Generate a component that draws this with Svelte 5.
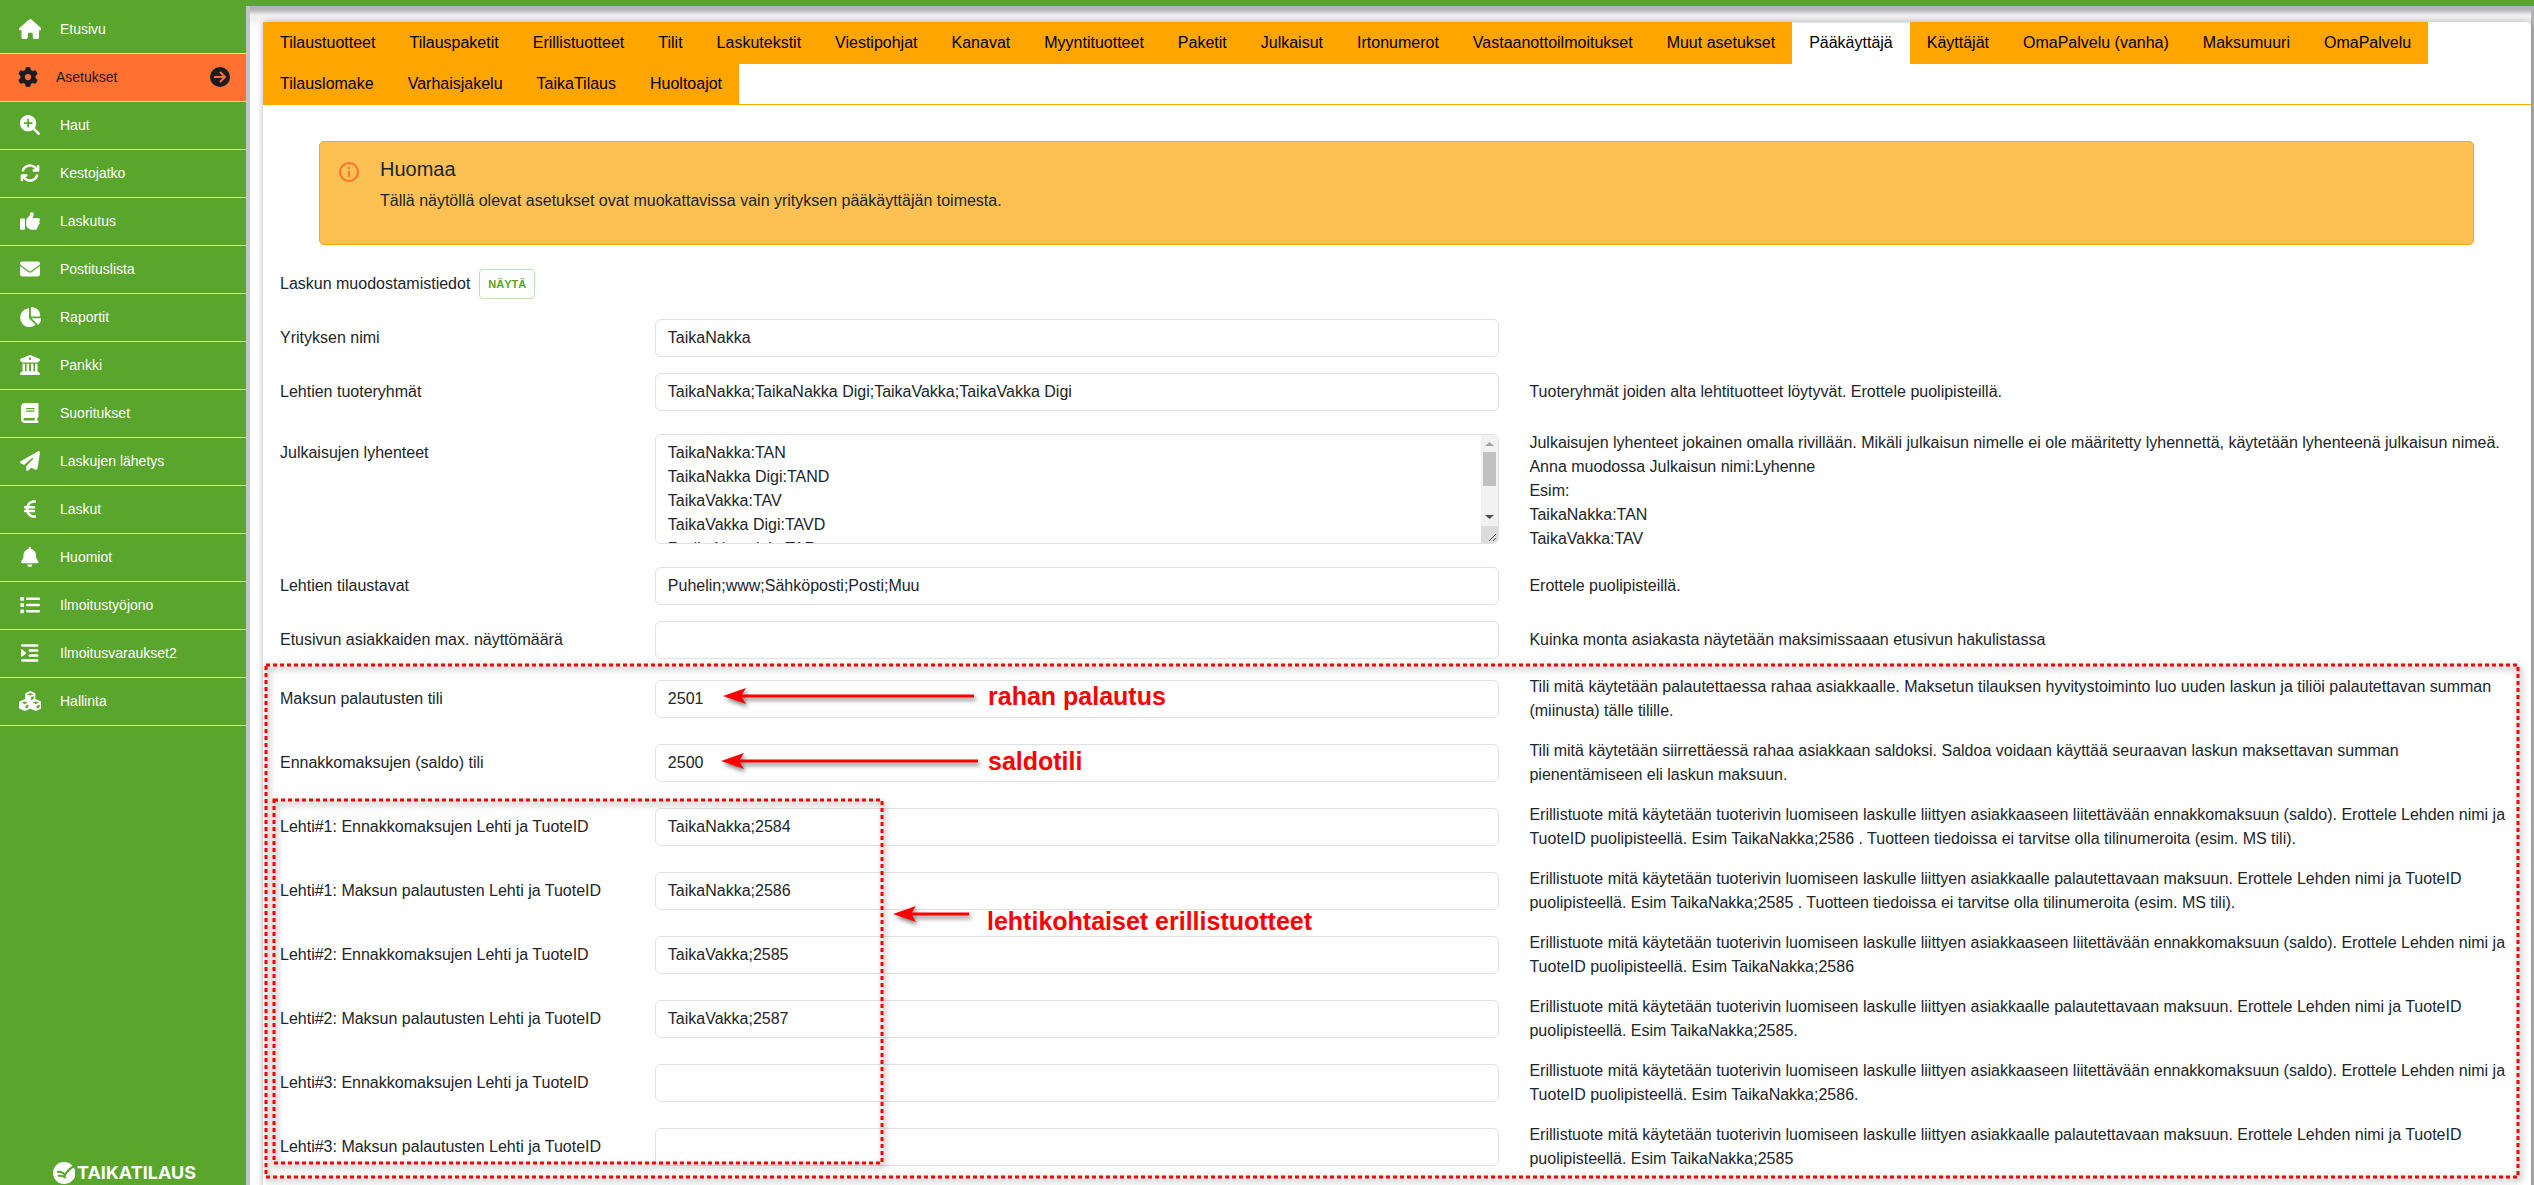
<script lang="ts">
    type Icon = { w: number; d: string };
    type Row = {
        id: string;
        label: string;
        value: string;
        help: string[];
        multiline?: boolean;
    };

    const icons: Record<string, Icon> = {
        home: {
            w: 576,
            d: "M575.8 255.5c0 18-15 32.1-32 32.1h-32l.7 160.2c0 2.7-.2 5.4-.5 8.1V472c0 22.1-17.9 40-40 40H456c-1.1 0-2.2 0-3.3-.1c-1.4 .1-2.8 .1-4.2 .1H416 392c-22.1 0-40-17.9-40-40V448 384c0-17.7-14.3-32-32-32H256c-17.7 0-32 14.3-32 32v64 24c0 22.1-17.9 40-40 40H160 128.1c-1.5 0-3-.1-4.5-.2c-1.2 .1-2.4 .2-3.6 .2H104c-22.1 0-40-17.9-40-40V360c0-.9 0-1.9 .1-2.8V287.6H32c-18 0-32-14-32-32.1c0-9 3-17 10-24L266.4 8c7-7 15-8 22-8s15 2 21 7L564.8 231.5c8 7 12 15 11 24z",
        },
        gear: {
            w: 512,
            d: "M495.9 166.6c3.2 8.7 .5 18.4-6.4 24.6l-43.3 39.4c1.1 8.3 1.7 16.8 1.7 25.4s-.6 17.1-1.7 25.4l43.3 39.4c6.9 6.2 9.6 15.9 6.4 24.6c-4.4 11.9-9.7 23.3-15.8 34.3l-4.7 8.1c-6.6 11-14 21.4-22.1 31.2c-5.9 7.2-15.7 9.6-24.5 6.8l-55.7-17.7c-13.4 10.3-28.2 18.9-44 25.4l-12.5 57.1c-2 9.1-9 16.3-18.2 17.8c-13.8 2.3-28 3.5-42.5 3.5s-28.7-1.2-42.5-3.5c-9.2-1.5-16.2-8.7-18.2-17.8l-12.5-57.1c-15.8-6.5-30.6-15.1-44-25.4L83.1 425.9c-8.8 2.8-18.6 .3-24.5-6.8c-8.1-9.8-15.5-20.2-22.1-31.2l-4.7-8.1c-6.1-11-11.4-22.4-15.8-34.3c-3.2-8.7-.5-18.4 6.4-24.6l43.3-39.4C64.6 273.1 64 264.6 64 256s.6-17.1 1.7-25.4L22.4 191.2c-6.9-6.2-9.6-15.9-6.4-24.6c4.4-11.9 9.7-23.3 15.8-34.3l4.7-8.1c6.6-11 14-21.4 22.1-31.2c5.9-7.2 15.7-9.6 24.5-6.8l55.7 17.7c13.4-10.3 28.2-18.9 44-25.4l12.5-57.1c2-9.1 9-16.3 18.2-17.8C227.3 1.2 241.5 0 256 0s28.7 1.2 42.5 3.5c9.2 1.5 16.2 8.7 18.2 17.8l12.5 57.1c15.8 6.5 30.6 15.1 44 25.4l55.7-17.7c8.8-2.8 18.6-.3 24.5 6.8c8.1 9.8 15.5 20.2 22.1 31.2l4.7 8.1c6.1 11 11.4 22.4 15.8 34.3zM256 336a80 80 0 1 0 0-160 80 80 0 1 0 0 160z",
        },
        search: {
            w: 512,
            d: "M416 208c0 45.9-14.9 88.3-40 122.7L502.6 457.4c12.5 12.5 12.5 32.8 0 45.3s-32.8 12.5-45.3 0L330.7 376c-34.4 25.2-76.8 40-122.7 40C93.1 416 0 322.9 0 208S93.1 0 208 0S416 93.1 416 208zM184 296c0 13.3 10.7 24 24 24s24-10.7 24-24V232h64c13.3 0 24-10.7 24-24s-10.7-24-24-24H232V120c0-13.3-10.7-24-24-24s-24 10.7-24 24v64H120c-13.3 0-24 10.7-24 24s10.7 24 24 24h64v64z",
        },
        refresh: {
            w: 512,
            d: "M105.1 202.6c7.7-21.8 20.2-42.3 37.8-59.8c62.5-62.5 163.8-62.5 226.3 0L386.3 160H352c-17.7 0-32 14.3-32 32s14.3 32 32 32H463.5h.4c17.7 0 32-14.3 32-32V80c0-17.7-14.3-32-32-32s-32 14.3-32 32v35.2L414.4 97.6c-87.5-87.5-229.3-87.5-316.8 0C73.2 122 55.6 150.7 44.8 181.4c-5.9 16.7 2.9 34.9 19.5 40.8s34.9-2.9 40.8-19.5zM39 289.3c-5 1.5-9.8 4.2-13.7 8.2c-4 4-6.7 8.8-8.1 14c-.3 1.2-.6 2.5-.8 3.8c-.3 1.7-.4 3.4-.4 5.1V432c0 17.7 14.3 32 32 32s32-14.3 32-32V396.9l17.6 17.5c87.5 87.4 229.3 87.4 316.7 0c24.4-24.4 42.1-53.1 52.9-83.7c5.9-16.7-2.9-34.9-19.5-40.8s-34.9 2.9-40.8 19.5c-7.7 21.8-20.2 42.3-37.8 59.8c-62.5 62.5-163.8 62.5-226.3 0l-.1-.1L125.6 352H160c17.7 0 32-14.3 32-32s-14.3-32-32-32H48.4c-1.6 0-3.2 .1-4.8 .3s-3.1 .5-4.6 1z",
        },
        thumb: {
            w: 512,
            d: "M313.4 32.9c26 5.2 42.9 30.5 37.7 56.5l-2.3 11.4c-5.3 26.7-15.1 52.1-28.8 75.2H464c26.5 0 48 21.5 48 48c0 18.5-10.5 34.6-25.9 42.6C497 275.4 504 288.9 504 304c0 23.4-16.8 42.9-38.9 47.1c4.4 7.3 6.9 15.8 6.9 24.9c0 21.3-13.9 39.4-33.1 45.6c.7 3.3 1.1 6.8 1.1 10.4c0 26.5-21.5 48-48 48H294.5c-19 0-37.5-5.6-53.3-16.1l-38.5-25.7C176 420.4 160 390.4 160 358.3V320 272 247.1c0-29.2 13.3-56.7 36-75l7.4-5.9c26.5-21.2 44.6-51 51.2-84.2l2.3-11.4c5.2-26 30.5-42.9 56.5-37.7zM32 192H96c17.7 0 32 14.3 32 32V448c0 17.7-14.3 32-32 32H32c-17.7 0-32-14.3-32-32V224c0-17.7 14.3-32 32-32z",
        },
        mail: {
            w: 512,
            d: "M48 64C21.5 64 0 85.5 0 112c0 15.1 7.1 29.3 19.2 38.4L236.8 313.6c11.4 8.5 27 8.5 38.4 0L492.8 150.4c12.1-9.1 19.2-23.3 19.2-38.4c0-26.5-21.5-48-48-48H48zM0 176V384c0 35.3 28.7 64 64 64H448c35.3 0 64-28.7 64-64V176L294.4 339.2c-22.8 17.1-54 17.1-76.8 0L0 176z",
        },
        pie: {
            w: 576,
            d: "M304 240V16.6c0-9 7-16.6 16-16.6C443.7 0 544 100.3 544 224c0 9-7.6 16-16.6 16H304zM32 272C32 150.7 122.1 50.3 239 34.3c9.2-1.3 17 6.1 17 15.4V288L412.5 444.5c6.7 6.7 6.2 17.7-1.5 23.1C371.8 495.6 323.8 512 272 512C139.5 512 32 404.6 32 272zm526.4 16c9.3 0 16.6 7.8 15.4 17c-7.7 55.9-34.6 105.6-73.9 142.3c-6 5.6-15.4 5.2-21.2-.7L320 288H558.4z",
        },
        bank: {
            w: 512,
            d: "M243.4 2.6l-224 96c-14 6-21.8 21-18.7 35.8S16.8 160 32 160v8c0 13.3 10.7 24 24 24H456c13.3 0 24-10.7 24-24v-8c15.2 0 28.3-10.7 31.3-25.6s-4.8-29.9-18.7-35.8l-224-96c-8-3.4-17.2-3.4-25.2 0zM128 224H64V420.3c-.6 .3-1.2 .7-1.8 1.1l-48 32c-11.7 7.8-17 22.4-12.9 35.9S17.9 512 32 512H480c14.1 0 26.5-9.2 30.6-22.7s-1.1-28.1-12.9-35.9l-48-32c-.6-.4-1.2-.7-1.8-1.1V224H384V416H344V224H280V416H232V224H168V416H128V224zM256 64a32 32 0 1 1 0 64 32 32 0 1 1 0-64z",
        },
        book: {
            w: 448,
            d: "M96 0C43 0 0 43 0 96V416c0 53 43 96 96 96H384h32c17.7 0 32-14.3 32-32s-14.3-32-32-32V384c17.7 0 32-14.3 32-32V32c0-17.7-14.3-32-32-32H384 96zm0 384H352v64H96c-17.7 0-32-14.3-32-32s14.3-32 32-32zm32-240c0-8.8 7.2-16 16-16H336c8.8 0 16 7.2 16 16s-7.2 16-16 16H144c-8.8 0-16-7.2-16-16zm16 48H336c8.8 0 16 7.2 16 16s-7.2 16-16 16H144c-8.8 0-16-7.2-16-16s7.2-16 16-16z",
        },
        plane: {
            w: 512,
            d: "M498.1 5.6c10.1 7 15.4 19.1 13.5 31.2l-64 416c-1.5 9.7-7.4 18.2-16 23s-18.9 5.4-28 1.6L284 427.7l-68.5 74.1c-8.9 9.7-22.9 12.9-35.2 8.1S160 493.2 160 480V396.4c0-4 1.5-7.8 4.2-10.7L331.8 202.8c5.8-6.3 5.6-16-.4-22s-15.7-6.4-22-.7L106 360.8 17.7 316.6C7.1 311.3 .3 300.7 0 288.9s5.9-22.8 16.1-28.7l448-256c10.7-6.1 23.9-5.5 34 1.4z",
        },
        euro: {
            w: 320,
            d: "M48.1 240c-.1 2.7-.1 5.3-.1 8v16c0 2.7 0 5.3 .1 8H32c-17.7 0-32 14.3-32 32s14.3 32 32 32H60.3C89.9 419.9 170 480 264 480h24c17.7 0 32-14.3 32-32s-14.3-32-32-32H264c-57.9 0-108.2-32.4-133.9-80H256c17.7 0 32-14.3 32-32s-14.3-32-32-32H112.2c-.1-2.6-.2-5.3-.2-8V248c0-2.7 .1-5.4 .2-8H256c17.7 0 32-14.3 32-32s-14.3-32-32-32H130.1c25.7-47.6 76-80 133.9-80h24c17.7 0 32-14.3 32-32s-14.3-32-32-32H264C170 32 89.9 92.1 60.3 176H32c-17.7 0-32 14.3-32 32s14.3 32 32 32H48.1z",
        },
        bell: {
            w: 448,
            d: "M224 0c-17.7 0-32 14.3-32 32V51.2C119 66 64 130.6 64 208v18.8c0 47-17.3 92.4-48.5 127.6l-7.4 8.3c-8.4 9.4-10.4 22.9-5.3 34.4S19.4 416 32 416H416c12.6 0 24-7.4 29.2-18.9s3.1-25-5.3-34.4l-7.4-8.3C401.3 319.2 384 273.9 384 226.8V208c0-77.4-55-142-128-156.8V32c0-17.7-14.3-32-32-32zm45.3 493.3c12-12 18.7-28.3 18.7-45.3H224 160c0 17 6.7 33.3 18.7 45.3s28.3 18.7 45.3 18.7s33.3-6.7 45.3-18.7z",
        },
        list: {
            w: 512,
            d: "M24 48h64q16 0 16 16v64q0 16-16 16H24q-16 0-16-16V64q0-16 16-16zM24 208h64q16 0 16 16v64q0 16-16 16H24q-16 0-16-16V224q0-16 16-16zM24 368h64q16 0 16 16v64q0 16-16 16H24q-16 0-16-16V384q0-16 16-16zM184 64H480a32 32 0 0 1 0 64H184a32 32 0 0 1 0-64zM184 224H480a32 32 0 0 1 0 64H184a32 32 0 0 1 0-64zM184 384H480a32 32 0 0 1 0 64H184a32 32 0 0 1 0-64z",
        },
        indent: {
            w: 448,
            d: "M32 32H416a32 32 0 0 1 0 64H32a32 32 0 0 1 0-64zM224 160H416a32 32 0 0 1 0 64H224a32 32 0 0 1 0-64zM224 288H416a32 32 0 0 1 0 64H224a32 32 0 0 1 0-64zM32 416H416a32 32 0 0 1 0 64H32a32 32 0 0 1 0-64zM0 176Q2 154 24 162L128 244Q138 256 128 268L24 350Q2 358 0 336z",
        },
        cubes: {
            w: 576,
            d: "M288 0L418 52V206L554 262Q576 272 576 296V426Q576 446 556 456L446 508Q430 514 414 508L288 452L162 508Q146 514 130 508L20 456Q0 446 0 426V296Q0 272 22 262L158 206V72Q158 56 174 48zM288 52L208 84L288 118L368 84zM310 160V234L374 206V130zM146 266L66 300L146 334L226 300zM168 378V452L240 418V346zM430 266L350 300L430 334L510 300zM452 378V452L528 418V346z",
        },
    };

    const menu = [
        ["home", "Etusivu"],
        ["gear", "Asetukset"],
        ["search", "Haut"],
        ["refresh", "Kestojatko"],
        ["thumb", "Laskutus"],
        ["mail", "Postituslista"],
        ["pie", "Raportit"],
        ["bank", "Pankki"],
        ["book", "Suoritukset"],
        ["plane", "Laskujen lähetys"],
        ["euro", "Laskut"],
        ["bell", "Huomiot"],
        ["list", "Ilmoitustyöjono"],
        ["indent", "Ilmoitusvaraukset2"],
        ["cubes", "Hallinta"],
    ];

    const tabs = [
        "Tilaustuotteet",
        "Tilauspaketit",
        "Erillistuotteet",
        "Tilit",
        "Laskutekstit",
        "Viestipohjat",
        "Kanavat",
        "Myyntituotteet",
        "Paketit",
        "Julkaisut",
        "Irtonumerot",
        "Vastaanottoilmoitukset",
        "Muut asetukset",
        "Pääkäyttäjä",
        "Käyttäjät",
        "OmaPalvelu (vanha)",
        "Maksumuuri",
        "OmaPalvelu",
        "Tilauslomake",
        "Varhaisjakelu",
        "TaikaTilaus",
        "Huoltoajot",
    ];

    const prepaidHelp =
        "Erillistuote mitä käytetään tuoterivin luomiseen laskulle liittyen asiakkaaseen liitettävään ennakkomaksuun (saldo). Erottele Lehden nimi ja TuoteID puolipisteellä. Esim ";
    const refundHelp =
        "Erillistuote mitä käytetään tuoterivin luomiseen laskulle liittyen asiakkaalle palautettavaan maksuun. Erottele Lehden nimi ja TuoteID puolipisteellä. Esim ";

    const rows: Row[] = $state([
        { id: "company", label: "Yrityksen nimi", value: "TaikaNakka", help: [] },
        {
            id: "groups",
            label: "Lehtien tuoteryhmät",
            value: "TaikaNakka;TaikaNakka Digi;TaikaVakka;TaikaVakka Digi",
            help: ["Tuoteryhmät joiden alta lehtituotteet löytyvät. Erottele puolipisteillä."],
        },
        {
            id: "abbreviations",
            label: "Julkaisujen lyhenteet",
            value: "TaikaNakka:TAN\nTaikaNakka Digi:TAND\nTaikaVakka:TAV\nTaikaVakka Digi:TAVD\nRadio Nostalgia:TAR\n\n",
            help: [
                "Julkaisujen lyhenteet jokainen omalla rivillään. Mikäli julkaisun nimelle ei ole määritetty lyhennettä, käytetään lyhenteenä julkaisun nimeä.",
                "Anna muodossa Julkaisun nimi:Lyhenne",
                "Esim:",
                "TaikaNakka:TAN",
                "TaikaVakka:TAV",
            ],
            multiline: true,
        },
        {
            id: "channels",
            label: "Lehtien tilaustavat",
            value: "Puhelin;www;Sähköposti;Posti;Muu",
            help: ["Erottele puolipisteillä."],
        },
        {
            id: "max-customers",
            label: "Etusivun asiakkaiden max. näyttömäärä",
            value: "",
            help: ["Kuinka monta asiakasta näytetään maksimissaaan etusivun hakulistassa"],
        },
        {
            id: "refund-account",
            label: "Maksun palautusten tili",
            value: "2501",
            help: [
                "Tili mitä käytetään palautettaessa rahaa asiakkaalle. Maksetun tilauksen hyvitystoiminto luo uuden laskun ja tiliöi palautettavan summan (miinusta) tälle tilille.",
            ],
        },
        {
            id: "prepaid-account",
            label: "Ennakkomaksujen (saldo) tili",
            value: "2500",
            help: [
                "Tili mitä käytetään siirrettäessä rahaa asiakkaan saldoksi. Saldoa voidaan käyttää seuraavan laskun maksettavan summan pienentämiseen eli laskun maksuun.",
            ],
        },
        {
            id: "prepaid-1",
            label: "Lehti#1: Ennakkomaksujen Lehti ja TuoteID",
            value: "TaikaNakka;2584",
            help: [prepaidHelp + "TaikaNakka;2586 . Tuotteen tiedoissa ei tarvitse olla tilinumeroita (esim. MS tili)."],
        },
        {
            id: "refund-1",
            label: "Lehti#1: Maksun palautusten Lehti ja TuoteID",
            value: "TaikaNakka;2586",
            help: [refundHelp + "TaikaNakka;2585 . Tuotteen tiedoissa ei tarvitse olla tilinumeroita (esim. MS tili)."],
        },
        {
            id: "prepaid-2",
            label: "Lehti#2: Ennakkomaksujen Lehti ja TuoteID",
            value: "TaikaVakka;2585",
            help: [prepaidHelp + "TaikaNakka;2586"],
        },
        {
            id: "refund-2",
            label: "Lehti#2: Maksun palautusten Lehti ja TuoteID",
            value: "TaikaVakka;2587",
            help: [refundHelp + "TaikaNakka;2585."],
        },
        {
            id: "prepaid-3",
            label: "Lehti#3: Ennakkomaksujen Lehti ja TuoteID",
            value: "",
            help: [prepaidHelp + "TaikaNakka;2586."],
        },
        {
            id: "refund-3",
            label: "Lehti#3: Maksun palautusten Lehti ja TuoteID",
            value: "",
            help: [refundHelp + "TaikaNakka;2585"],
        },
    ]);

    let activeItem = $state("Asetukset");
    let activeTab = $state("Pääkäyttäjä");
</script>

{#snippet arrow(length: number)}
    <svg width={length} height="18" viewBox="0 0 {length} 18">
        <path d="M18 9H{length}" stroke="#f00" stroke-width="3" />
        <path d="M0 9L23 1L18 9L23 17z" fill="#f00" />
    </svg>
{/snippet}

<div class="topbar"></div>
<div class="layout">
    <nav class="sidebar">
        {#each menu as [icon, text]}
            <a
                href="#{icon}"
                class="menu-item"
                class:active={text === activeItem}
                onclick={() => (activeItem = text)}
            >
                <span class="menu-icon">
                    <svg viewBox="0 0 {icons[icon].w} 512" height="20">
                        <path d={icons[icon].d} fill="currentColor" fill-rule="evenodd" />
                    </svg>
                </span>
                <span>{text}</span>
                {#if text === activeItem}
                    <svg class="menu-arrow" viewBox="0 0 20 20" width="20" height="20">
                        <circle cx="10" cy="10" r="10" fill="currentColor" />
                        <path
                            d="M4 10H15M10 5L15 10L10 15"
                            fill="none"
                            stroke="#ff7031"
                            stroke-width="2"
                        />
                    </svg>
                {/if}
            </a>
        {/each}
        <div class="logo">
            <svg viewBox="0 0 24 24" width="24" height="24">
                <circle cx="11" cy="12" r="11" fill="#fff" />
                <path
                    d="M4 11Q9 10 12 14Q15 8 23 4M5 15Q9 14 13 17"
                    fill="none"
                    stroke="#5aa52c"
                    stroke-width="2"
                />
                <path d="M12 17Q18 16 22 7V16Q19 21 15 22Q20 18 20 13Q17 17 12 17z" fill="#fff" />
            </svg>
            <span>TAIKATILAUS</span>
        </div>
    </nav>

    <main class="content">
        <div class="card">
            <ul class="tabs">
                {#each tabs as tab}
                    <li>
                        <button
                            type="button"
                            class:active={tab === activeTab}
                            onclick={() => (activeTab = tab)}>{tab}</button
                        >
                    </li>
                {/each}
            </ul>

            <div class="alert">
                <svg viewBox="0 0 20 20" width="20" height="20">
                    <circle cx="10" cy="10" r="9" fill="none" stroke="#ff7031" stroke-width="2" />
                    <path d="M10 5V7M10 9V15" stroke="#ff7031" stroke-width="2" />
                </svg>
                <div>
                    <h2>Huomaa</h2>
                    <p>Tällä näytöllä olevat asetukset ovat muokattavissa vain yrityksen pääkäyttäjän toimesta.</p>
                </div>
            </div>

            <form class="settings">
                <div class="invoice-info">
                    <span>Laskun muodostamistiedot</span>
                    <button type="button">NÄYTÄ</button>
                </div>
                {#each rows as row}
                    <div class="row" class:tall={row.multiline}>
                        <label for={row.id}>{row.label}</label>
                        <div class="field">
                            {#if row.multiline}
                                <textarea id={row.id} bind:value={row.value}></textarea>
                                <svg class="scrollbar" viewBox="0 0 17 108" width="17" height="108">
                                    <path d="M0 0H12Q17 0 17 5V91H0z" fill="#f1f1f1" />
                                    <path d="M4 11H13L8.5 7z" fill="#a3a3a3" />
                                    <path d="M2 17H15V51H2z" fill="#c1c1c1" />
                                    <path d="M4 80H13L8.5 84z" fill="#505050" />
                                    <path d="M0 91H17V103Q17 108 12 108H0z" fill="#dcdcdc" />
                                    <path d="M8 106L15 99M12 106L15 103" stroke="#505050" />
                                </svg>
                            {:else}
                                <input id={row.id} type="text" bind:value={row.value} />
                            {/if}
                        </div>
                        <div class="help">
                            {#each row.help as line}
                                <p>{line}</p>
                            {/each}
                        </div>
                    </div>
                {/each}
            </form>

            <!-- red notes on top of the form -->
            <svg class="frame frame-all"><rect width="100%" height="100%" /></svg>
            <svg class="frame frame-products"><rect width="100%" height="100%" /></svg>
            <div class="note note-refund">
                {@render arrow(251)}
                <span>rahan palautus</span>
            </div>
            <div class="note note-balance">
                {@render arrow(257)}
                <span>saldotili</span>
            </div>
            <div class="note note-products">
                {@render arrow(76)}
                <span>lehtikohtaiset erillistuotteet</span>
            </div>
        </div>
    </main>
</div>

<style>
    :global(body) {
        overflow: hidden;
        font-family: "Liberation Sans", Arial, sans-serif;
        font-size: 16px;
        line-height: 24px;
        color: #212529;
        background: #fff;
    }

    .topbar {
        height: 6px;
        background: #5aa52c;
    }

    .layout {
        display: flex;
        height: calc(100vh - 6px);
    }

    .sidebar {
        flex: 0 0 246px;
        display: flex;
        flex-direction: column;
        background: #5aa52c;
        color: #fff;
    }

    .menu-item {
        display: flex;
        align-items: center;
        height: 45px;
        padding: 0 16px 2px 0;
        border-bottom: 1px solid #cdeab0;
        color: inherit;
        font-size: 14px;
        text-decoration: none;
    }

    .menu-item.active {
        background: #ff7031;
        color: #1b1b22;
    }

    .menu-icon {
        flex: 0 0 60px;
        display: flex;
        justify-content: center;
    }

    .active .menu-icon {
        flex-basis: 56px;
    }

    .menu-arrow {
        margin-left: auto;
    }

    .logo {
        display: flex;
        align-items: center;
        margin-top: auto;
        padding-left: 53px;
        font-family: Inter, "Liberation Sans", sans-serif;
        font-size: 18px;
        font-weight: 700;
    }

    .content {
        flex: 1;
        min-width: 0;
        padding: 16px 0 0 13px;
        border-left: 4px solid #c4c4c4;
        border-right: 3px solid #b3b3b3;
        background: linear-gradient(#b0b0b0, #b8b8b8 4px, #f0f0f0 9px, #f2f2f2 14px, #fff 22px);
    }

    .card {
        position: relative;
        padding-bottom: 24px;
        border-radius: 5px;
        background: #fff;
        box-shadow: 0 0 6px rgba(0, 0, 0, 0.3);
    }

    .tabs {
        display: flex;
        flex-wrap: wrap;
        margin: 0;
        padding: 0;
        border-bottom: 1px solid orange;
        list-style: none;
    }

    .tabs li {
        margin-bottom: -1px;
    }

    .tabs button {
        display: block;
        padding: 8px 16px;
        border: 1px solid orange;
        background: orange;
        color: #000;
        font: inherit;
        cursor: pointer;
    }

    .tabs button.active {
        border-color: #d5f0e0 #fff #fff;
        background: #fff;
    }

    .alert {
        display: flex;
        gap: 21px;
        min-height: 78px;
        margin: 36px 57px 0 56px;
        padding: 12px 19px;
        border: 1px solid orange;
        border-radius: 5px;
        background: #fdc153;
    }

    .alert svg {
        margin-top: 8px;
    }

    .alert h2 {
        margin: 3px 0 8px;
        font-size: 20px;
        font-weight: 400;
    }

    .alert p {
        margin: 0;
    }

    .settings {
        display: flex;
        flex-direction: column;
        gap: 16px;
        padding: 24px 2px 0 17px;
    }

    .invoice-info {
        display: flex;
        align-items: center;
        gap: 9px;
        margin-bottom: 4px;
    }

    .invoice-info button {
        height: 30px;
        padding: 0 8px;
        border: 1px solid #b9e6b0;
        border-radius: 4px;
        background: #fff;
        color: #5aa52c;
        font-family: inherit;
        font-size: 11px;
        font-weight: 700;
        cursor: pointer;
    }

    .row {
        display: grid;
        grid-template-columns: 3fr 7fr 8fr;
        align-items: center;
    }

    .field {
        position: relative;
        display: flex;
        padding-right: 30px;
    }

    input,
    textarea {
        box-sizing: border-box;
        width: 100%;
        height: 38px;
        padding: 6px 12px;
        border: 1px solid #dee2e6;
        border-radius: 6px;
        background: #fff;
        color: inherit;
        font: inherit;
    }

    textarea {
        height: 110px;
        padding-right: 29px;
        resize: none;
    }

    .scrollbar {
        position: absolute;
        top: 1px;
        right: 31px;
        pointer-events: none;
    }

    .help {
        padding-right: 20px;
    }

    .help p {
        margin: 0;
    }

    .tall label {
        align-self: start;
        padding-top: 14px;
    }

    .tall .help {
        padding-top: 4px;
    }

    .frame {
        position: absolute;
        overflow: visible;
        pointer-events: none;
        filter: drop-shadow(2px 3px 3px rgba(0, 0, 0, 0.5));
    }

    .frame rect {
        fill: none;
        stroke: #f00;
        stroke-width: 3px;
        stroke-dasharray: 4 3;
    }

    .frame-all {
        top: 643px;
        left: 3px;
        width: calc(100% - 16px);
        height: 512px;
    }

    .frame-products {
        top: 778px;
        left: 11px;
        width: 608px;
        height: 363px;
    }

    .note {
        position: absolute;
        display: flex;
        align-items: center;
        color: #f00;
        font-size: 25px;
        font-weight: 700;
        white-space: nowrap;
        pointer-events: none;
    }

    .note svg {
        filter: drop-shadow(2px 3px 2px rgba(0, 0, 0, 0.5));
    }

    .note-refund {
        top: 662px;
        left: 460px;
        gap: 14px;
    }

    .note-balance {
        top: 727px;
        left: 458px;
        gap: 10px;
    }

    .note-products {
        top: 883px;
        left: 630px;
        gap: 18px;
        align-items: flex-start;
        line-height: 32px;
    }
</style>
